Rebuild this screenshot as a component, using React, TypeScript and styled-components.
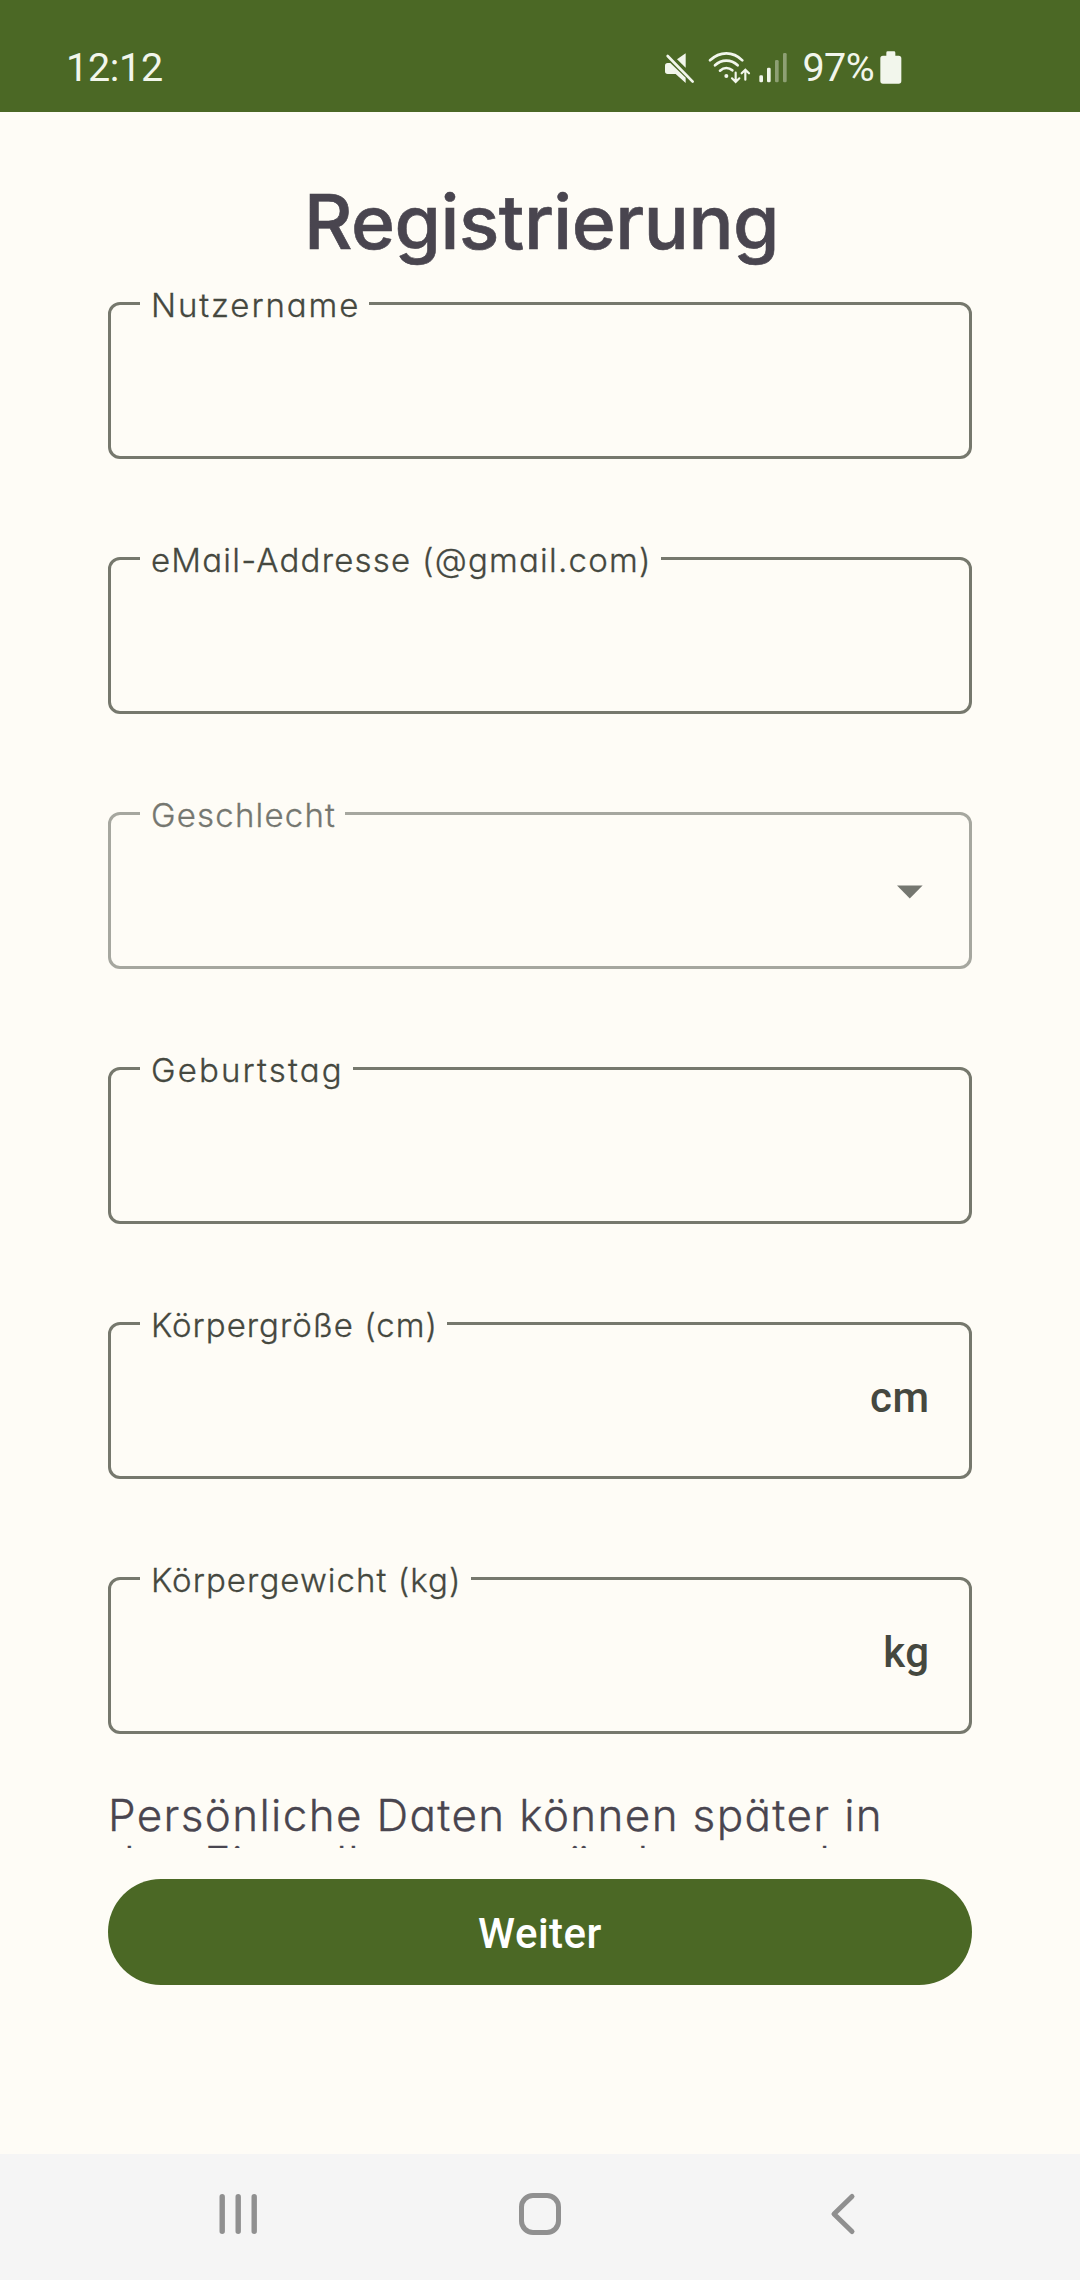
import React from "react";
import styled, { createGlobalStyle } from "styled-components";

const ROUNDED = `Inter, "Open Sans", sans-serif`;
const SYSTEM = `Roboto, "Liberation Sans", sans-serif`;

const GlobalStyle = createGlobalStyle`
  *, *::before, *::after { box-sizing: border-box; }
  body { margin: 0; background: #fefcf6; }
`;

const Screen = styled.div`
  width: 1080px;
  height: 2280px;
  display: flex;
  flex-direction: column;
  background: #fefcf6;
  overflow: hidden;
`;

const StatusBar = styled.header`
  flex: none;
  height: 112px;
  padding: 45px 178px 0 66px;
  display: flex;
  align-items: flex-start;
  justify-content: space-between;
  background: #4b6825;
  color: #f2f6ec;
  font: 400 39.5px/46px ${SYSTEM};
`;

const Clock = styled.span`
  letter-spacing: -0.3px;
`;

const StatusIcons = styled.div`
  display: flex;
  align-items: flex-start;
`;

const StatusIcon = styled.svg<{ $gap: number }>`
  display: block;
  margin-top: 6px;
  margin-right: ${(p) => p.$gap}px;
`;

const Percent = styled.span`
  width: 77.5px;
  letter-spacing: -0.6px;
`;

const ScrollArea = styled.main`
  flex: none;
  height: 1736px;
  padding: 0 108px;
  overflow: hidden;
`;

const Title = styled.h1`
  margin: 0;
  height: 172px;
  padding: 64px 0 0 3px;
  text-align: center;
  font: 500 75px/91px ${ROUNDED};
  font-feature-settings: "cv11";
  -webkit-text-stroke: 0.6px currentColor;
  letter-spacing: -0.5px;
  color: #49454f;
  white-space: nowrap;
`;

const Field = styled.fieldset<{ $disabled?: boolean }>`
  height: 175px;
  margin: 0 0 80px;
  padding: 0 39.5px 0 0;
  border: 3px solid ${(p) => (p.$disabled ? "#a6a79f" : "#76786d")};
  border-radius: 12px;
  color: ${(p) => (p.$disabled ? "#757770" : "#45483f")};
`;

const Label = styled.legend<{ $spacing: number }>`
  height: 39px;
  margin-left: 29px;
  padding: 0 9px 0 11px;
  font: 300 33px/43px ${ROUNDED};
  font-feature-settings: "cv11";
  -webkit-text-stroke: 0.3px currentColor;
  letter-spacing: ${(p) => p.$spacing}px;
  white-space: nowrap;
`;

const FieldContent = styled.div`
  height: 109px;
  display: flex;
  align-items: center;
  justify-content: flex-end;
`;

const Unit = styled.span`
  font: 500 42px/50px ${SYSTEM};
  letter-spacing: 0.5px;
`;

const Hint = styled.p`
  margin: -22px 0 0;
  font: 300 44px/47px ${ROUNDED};
  font-feature-settings: "cv11";
  -webkit-text-stroke: 0.3px currentColor;
  color: #49454f;
  white-space: nowrap;
`;

const Line = styled.span<{ $spacing: number }>`
  display: block;
  letter-spacing: ${(p) => p.$spacing}px;
`;

const Submit = styled.button`
  flex: none;
  height: 106px;
  margin: 31px 108px 0;
  padding: 4px 0 0;
  border: 0;
  border-radius: 53px;
  background: #4b6825;
  color: #ffffff;
  font: 500 42px/50px ${SYSTEM};
  letter-spacing: 0.5px;
`;

const NavBar = styled.nav`
  flex: none;
  height: 126px;
  margin-top: auto;
  padding: 0 217px 6px;
  display: flex;
  align-items: center;
  justify-content: space-between;
  background: #f5f5f5;
`;

const NavIcon = styled.svg`
  display: block;
  fill: none;
  stroke: #909090;
  stroke-linecap: round;
  stroke-linejoin: round;
`;

type FieldSpec = { label: string; spacing: number; unit?: string; dropdown?: boolean };

const FIELDS: FieldSpec[] = [
  { label: "Nutzername", spacing: 1.9 },
  { label: "eMail-Addresse (@gmail.com)", spacing: 1.22 },
  { label: "Geschlecht", spacing: 1.2, dropdown: true },
  { label: "Geburtstag", spacing: 2.15 },
  { label: "Körpergröße (cm)", spacing: 1, unit: "cm" },
  { label: "Körpergewicht (kg)", spacing: 1.05, unit: "kg" },
];

function StatusIconsRow() {
  return (
    <StatusIcons>
      <StatusIcon $gap={12} width="32" height="34" viewBox="73 63 96 102" fill="#f2f6ec">
        <path d="M138 70V113L112 88Z" />
        <path d="M84 99H92L138 143V159L108 132H84Q76 132 76 124V107Q76 99 84 99Z" />
        <path d="M84 78L159 155" stroke="#f2f6ec" strokeWidth="8" strokeLinecap="round" />
      </StatusIcon>
      <StatusIcon $gap={7} width="43" height="34" viewBox="203 63 129 102" fill="none" stroke="#f2f6ec" strokeWidth="8" strokeLinecap="round">
        <path d="M209 91Q231 70 258 70Q285 70 306 91" />
        <path d="M224 106Q239 92 258 92Q277 92 292 106" />
        <path d="M239 122Q248 114 258 114Q268 114 276 121" />
        <circle cx="258" cy="138" r="6" fill="#f2f6ec" stroke="none" />
        <path d="M286 128V155M275 145L286 156L297 145M315 149V120M304 130L315 119L326 130" strokeWidth="6.5" />
      </StatusIcon>
      <StatusIcon $gap={15} width="30" height="34" viewBox="354 63 90 102" fill="#f2f6ec">
        <rect x="358" y="136" width="11" height="21" rx="4" />
        <rect x="381" y="113" width="11" height="44" rx="4" />
        <rect x="405" y="90" width="11" height="67" rx="4" opacity=".4" />
        <rect x="429" y="69" width="11" height="88" rx="4" opacity=".4" />
      </StatusIcon>
      <Percent>97%</Percent>
      <StatusIcon $gap={0} width="22" height="34" viewBox="719 63 66 102" fill="#f2f6ec">
        <path d="M742 64H761Q765 64 765 68V77H775Q783 77 783 85V153Q783 161 775 161H728Q720 161 720 153V85Q720 77 728 77H738V68Q738 64 742 64Z" />
      </StatusIcon>
    </StatusIcons>
  );
}

export default function App() {
  return (
    <>
      <GlobalStyle />
      <Screen>
        <StatusBar>
          <Clock>12:12</Clock>
          <StatusIconsRow />
        </StatusBar>
        <ScrollArea>
          <Title>Registrierung</Title>
          {FIELDS.map((f) => (
            <Field key={f.label} $disabled={f.dropdown}>
              <Label $spacing={f.spacing}>{f.label}</Label>
              <FieldContent>
                {f.unit && <Unit>{f.unit}</Unit>}
                {f.dropdown && (
                  <svg width="40" height="34" viewBox="0 0 40 34">
                    <path d="M7 14.4H32.6L19.8 27.4Z" fill="#757770" />
                  </svg>
                )}
              </FieldContent>
            </Field>
          ))}
          <Hint>
            <Line $spacing={1.35}>Persönliche Daten können später in</Line>
            <Line $spacing={1.5}>den Einstellungen geändert werden</Line>
          </Hint>
        </ScrollArea>
        <Submit>Weiter</Submit>
        <NavBar>
          <NavIcon width="42" height="46" viewBox="0 0 42 46" strokeWidth="5.4">
            <path d="M5.2 5.7V40.3M21.2 5.7V40.3M37.2 5.7V40.3" />
          </NavIcon>
          <NavIcon width="46" height="46" viewBox="0 0 46 46" strokeWidth="5">
            <rect x="4.5" y="4.5" width="37" height="37" rx="11.5" />
          </NavIcon>
          <NavIcon width="42" height="46" viewBox="0 0 42 46" strokeWidth="5">
            <path d="M31 5.5L13 23L31 40.5" />
          </NavIcon>
        </NavBar>
      </Screen>
    </>
  );
}
